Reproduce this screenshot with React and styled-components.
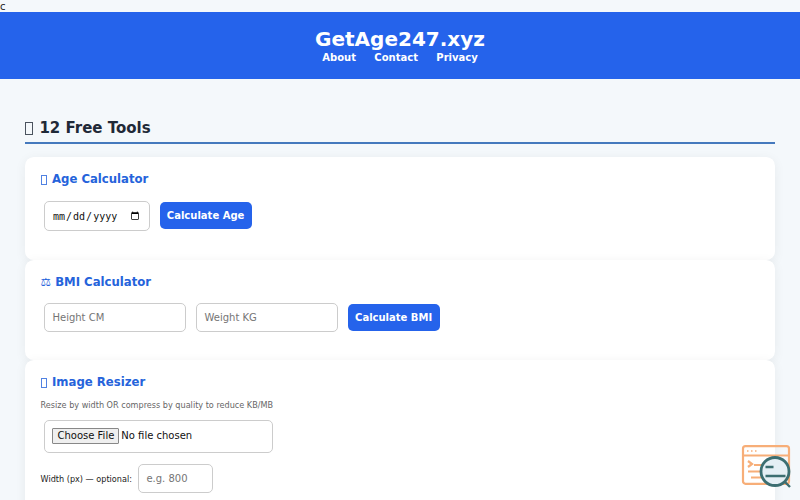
import React from 'react';
import styled, { createGlobalStyle } from 'styled-components';

const GlobalStyle = createGlobalStyle`
  * { box-sizing: border-box; }
  html, body { margin: 0; height: 500px; overflow: hidden; }
  body {
    background: #f4f8fb;
    color: #222;
    font-family: "DejaVu Sans", sans-serif;
    font-size: 10px;
  }
`;

const Page = styled.div`
  height: 500px;
  overflow: hidden;
`;

const StrayText = styled.div`
  height: 12px;
  line-height: 13px;
`;

const Header = styled.header`
  height: 67px;
  padding-top: 16px;
  background: #2563eb;
  color: #fff;
  text-align: center;
`;

const SiteName = styled.h1`
  margin: 0;
  font-size: 20px;
  line-height: 23.5px;
`;

const Nav = styled.nav`
  display: flex;
  justify-content: center;
  gap: 18.4px;
  line-height: 12px;
`;

const NavLink = styled.a`
  color: #fff;
  font-weight: 700;
`;

const Main = styled.main`
  padding: 39px 25px 0;
`;

const SectionTitle = styled.h2`
  display: flex;
  align-items: flex-start;
  margin: 0 0 13px;
  height: 26px;
  border-bottom: 2px solid #4579bd;
  font-size: 15px;
  line-height: 20px;
  color: #1f2937;
`;

const EmptyGlyph = styled.span`
  flex: none;
  width: ${(p) => (p.$large ? 8 : 6)}px;
  height: ${(p) => (p.$large ? 13 : 10)}px;
  margin: ${(p) => (p.$large ? '4px 6px 0 0.4px' : '2.5px 5px 0 0.4px')};
  border: 1px solid currentColor;
  opacity: 0.8;
`;

const Card = styled.section`
  height: ${(p) => p.$height}px;
  padding: 15px 15.6px;
  border-radius: 8.75px;
  background: #fff;
  box-shadow: 0 2.5px 12px rgba(0, 0, 0, 0.06);
`;

const CardTitle = styled.h3`
  display: flex;
  margin: 0;
  font-size: 11.7px;
  line-height: 14px;
  color: #2563db;
`;

const Controls = styled.div`
  display: flex;
  align-items: center;
  margin-top: ${(p) => p.$top}px;
  padding-left: ${(p) => p.$indent ?? 3.4}px;
  gap: ${(p) => p.$gap ?? 10}px;
`;

const Field = styled.input`
  width: ${(p) => p.$width}px;
  height: ${(p) => p.$height ?? 29}px;
  margin: 0;
  padding: 7.5px;
  border: 1px solid #ccc;
  border-radius: 5px;
  background: #fff;
  color: #111;
  font: 10px "DejaVu Sans", sans-serif;
  &::placeholder { color: #757575; }
`;

const DateField = styled(Field)`
  padding: 7px;
  font-family: "DejaVu Sans Mono", monospace;
`;

const FileField = styled(Field)`
  &::file-selector-button {
    height: 15.5px;
    margin: 0 2px 0 0;
    padding: 0 4px;
    border: 1px solid #888;
    border-radius: 1px;
    background: #efefef;
    color: #111;
    font: inherit;
  }
`;

const Button = styled.button`
  width: 92px;
  height: 27px;
  margin: 0 0 1px -0.4px;
  padding: 0;
  border: 0;
  border-radius: 5px;
  background: #2563eb;
  color: #fff;
  font: 700 10px "DejaVu Sans", sans-serif;
`;

const Hint = styled.p`
  margin: 11px 0 0;
  font-size: 8.125px;
  line-height: 10px;
  color: #666;
`;

const Label = styled.label`
  font-size: 8.125px;
`;

const Badge = styled.svg`
  position: fixed;
  left: 740px;
  top: 443px;
`;

export default function App() {
  return (
    <Page>
      <GlobalStyle />
      <StrayText>c</StrayText>
      <Header>
        <SiteName>GetAge247.xyz</SiteName>
        <Nav>
          <NavLink>About</NavLink>
          <NavLink>Contact</NavLink>
          <NavLink>Privacy</NavLink>
        </Nav>
      </Header>
      <Main>
        <SectionTitle><EmptyGlyph $large />12 Free Tools</SectionTitle>
        <Card $height={102.5}>
          <CardTitle><EmptyGlyph />Age Calculator</CardTitle>
          <Controls $top={15}>
            <DateField type="date" $width={106} $height={30} />
            <Button>Calculate Age</Button>
          </Controls>
        </Card>
        <Card $height={100.5}>
          <CardTitle>⚖ BMI Calculator</CardTitle>
          <Controls $top={14.5}>
            <Field placeholder="Height CM" $width={142} />
            <Field placeholder="Weight KG" $width={142} />
            <Button>Calculate BMI</Button>
          </Controls>
        </Card>
        <Card $height={180}>
          <CardTitle><EmptyGlyph />Image Resizer</CardTitle>
          <Hint>Resize by width OR compress by quality to reduce KB/MB</Hint>
          <Controls $top={9.5}>
            <FileField type="file" $width={229.5} $height={33} />
          </Controls>
          <Controls $top={11.5} $indent={0} $gap={6}>
            <Label>Width (px) — optional:</Label>
            <Field placeholder="e.g. 800" $width={75} />
          </Controls>
        </Card>
      </Main>
      <Badge width="52" height="46" viewBox="0 0 52 46" fill="none">
        <g stroke="#f7ae78" strokeWidth="2.2">
          <rect x="3" y="3.2" width="46" height="37.6" rx="2.5" />
          <path d="M3 12.5h46M14 22h10M8 28.5h12M11 34.5h13" />
          <path d="M8 18l4 3-4 3" />
          <path d="M7 8h1.5M11 8h1.5M15 8h1.5" strokeWidth="1.5" />
        </g>
        <circle cx="35" cy="28.5" r="14" fill="#e5eff5" stroke="#3c6e71" strokeWidth="2.8" />
        <path d="M25.5 24h8M25.5 33h20M45 39l5 5" stroke="#3c6e71" strokeWidth="2.4" />
      </Badge>
    </Page>
  );
}
